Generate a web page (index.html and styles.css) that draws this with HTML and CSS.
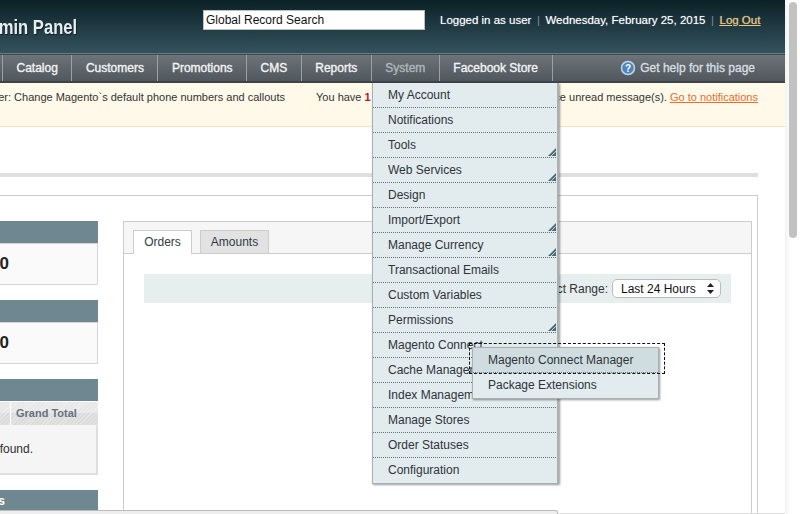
FILE: index.html
```html
<!DOCTYPE html>
<html lang="en">
<head>
<meta charset="utf-8">
<title>Magento Admin Panel</title>
<link rel="stylesheet" href="styles.css">
</head>
<body>
<div class="page">
  <header class="header">
    <div class="logo"><span class="logo-text">Admin Panel</span></div>
    <input class="search" type="text" value="Global Record Search">
    <div class="account">
      <span>Logged in as user</span><span class="sep">|</span><span>Wednesday, February 25, 2015</span><span class="sep">|</span><a class="logout" href="#">Log Out</a>
    </div>
  </header>
  <nav class="nav">
    <span class="nav-edge"></span>
    <a class="nav-item" href="#">Catalog</a>
    <a class="nav-item" href="#">Customers</a>
    <a class="nav-item" href="#">Promotions</a>
    <a class="nav-item" href="#">CMS</a>
    <a class="nav-item" href="#">Reports</a>
    <a class="nav-item nav-active" href="#">System</a>
    <a class="nav-item" href="#">Facebook Store</a>
    <a class="help" href="#">
      <svg class="help-icon" width="16" height="16" viewBox="0 0 16 16"><circle cx="8" cy="8" r="6.5" fill="#4f83bb" stroke="#c3d6e8" stroke-width="1.5"/><text x="8" y="11.6" text-anchor="middle" class="help-q">?</text></svg>
      <span>Get help for this page</span>
    </a>
  </nav>
  <div class="notice">
    <div class="notice-left"><span>Reminder: Change Magento`s default phone numbers and callouts</span></div>
    <div class="notice-right">You have <b class="critical">1</b> <span class="counts">critical, 2 major, 4 minor and 21 notice</span> unread message(s). <a class="notice-link" href="#">Go to notifications</a></div>
  </div>
  <div class="title-area"></div>
  <div class="panel">
    <aside class="side">
      <section class="side-card">
        <div class="side-head"></div>
        <div class="side-value"><span>$0.00</span></div>
      </section>
      <section class="side-card">
        <div class="side-head"></div>
        <div class="side-value"><span>$0.00</span></div>
      </section>
      <section class="side-card">
        <div class="side-head"></div>
        <div class="grid-head"><span class="grid-th">Grand Total</span></div>
        <div class="grid-empty"><span>No records found.</span></div>
      </section>
      <section class="side-card">
        <div class="side-head side-head-text"><span>Last 5 Search Terms</span></div>
      </section>
    </aside>
    <main class="chart">
      <div class="tabs">
        <a class="tab tab-on" href="#">Orders</a>
        <a class="tab tab-off" href="#">Amounts</a>
      </div>
      <div class="range">
        <span>Select Range:</span>
        <div class="select">
          <span>Last 24 Hours</span>
          <svg width="7" height="11" viewBox="0 0 7 11"><path d="M3.5 0 7 4H0zM3.5 11 0 7h7z" fill="#222"/></svg>
        </div>
      </div>
    </main>
  </div>

  <ul class="menu">
    <li class="row">My Account</li>
    <li class="row">Notifications</li>
    <li class="row">Tools<svg class="arrow" width="8" height="8" viewBox="0 0 9 9"><path d="M9 0V9H0z" fill="#4a6a76"/><path d="M3.5 9 9 3.5" stroke="#e2ebee" stroke-width="1"/></svg></li>
    <li class="row">Web Services<svg class="arrow" width="8" height="8" viewBox="0 0 9 9"><path d="M9 0V9H0z" fill="#4a6a76"/><path d="M3.5 9 9 3.5" stroke="#e2ebee" stroke-width="1"/></svg></li>
    <li class="row">Design</li>
    <li class="row">Import/Export<svg class="arrow" width="8" height="8" viewBox="0 0 9 9"><path d="M9 0V9H0z" fill="#4a6a76"/><path d="M3.5 9 9 3.5" stroke="#e2ebee" stroke-width="1"/></svg></li>
    <li class="row">Manage Currency<svg class="arrow" width="8" height="8" viewBox="0 0 9 9"><path d="M9 0V9H0z" fill="#4a6a76"/><path d="M3.5 9 9 3.5" stroke="#e2ebee" stroke-width="1"/></svg></li>
    <li class="row">Transactional Emails</li>
    <li class="row">Custom Variables</li>
    <li class="row">Permissions<svg class="arrow" width="8" height="8" viewBox="0 0 9 9"><path d="M9 0V9H0z" fill="#4a6a76"/><path d="M3.5 9 9 3.5" stroke="#e2ebee" stroke-width="1"/></svg></li>
    <li class="row">Magento Connect</li>
    <li class="row">Cache Management</li>
    <li class="row">Index Management</li>
    <li class="row">Manage Stores</li>
    <li class="row">Order Statuses</li>
    <li class="row row-last">Configuration</li>
  </ul>
  <ul class="submenu">
    <li class="row sub-hover">Magento Connect Manager</li>
    <li class="row row-last">Package Extensions</li>
  </ul>
  <div class="focus-ring"></div>
  <div class="status"><div class="status-bubble"></div><div class="status-rest"></div></div>
</div>
<div class="scrollbar"><div class="thumb"></div></div>
</body>
</html>
```
FILE: styles.css
```css
* { box-sizing: border-box; }
html, body { height: 100%; }
body {
  margin: 0;
  display: flex;
  height: 514px;
  overflow: hidden;
  background: #fff;
  font-family: "Liberation Sans", Arial, sans-serif;
  font-size: 12px;
  color: #2f2f2f;
}
a { color: inherit; text-decoration: none; }
ul { list-style: none; margin: 0; padding: 0; }

.page { position: relative; width: 785px; height: 514px; overflow: hidden; flex: none; }

.header {
  height: 54px;
  display: flex;
  align-items: flex-start;
  background: linear-gradient(#0b2127, #35525d);
  border-bottom: 1px solid #5f7c83;
}
.logo {
  width: 77px;
  margin-top: 16px;
  overflow: hidden;
  display: flex;
  justify-content: flex-end;
  white-space: nowrap;
  font-size: 20px;
  line-height: 22px;
  font-weight: 700;
  color: #e8eef0;
  text-shadow: 1px 1px 1px #0a1c22;
  flex: none;
}
.logo-text { display: block; transform: scaleX(.83); transform-origin: right center; }
.search {
  width: 222px;
  height: 20px;
  margin: 10px 0 0 126px;
  padding: 0 2px;
  border: 1px solid #b9c0c2;
  background: #fff;
  font: 12px "Liberation Sans", Arial, sans-serif;
  color: #111;
  flex: none;
}
.account {
  margin: 12px 0 0 15px;
  display: flex;
  white-space: nowrap;
  color: #fff;
  font-size: 11.5px;
  line-height: 16px;
  text-shadow: 0 0 1px rgba(255,255,255,.5);
}
.sep { width: 14px; text-align: center; color: #7d8f95; text-shadow: none; }
.logout { color: #f4c672; text-decoration: underline; }

.nav {
  height: 29px;
  display: flex;
  background: linear-gradient(#6d7479, #50585d);
  border-bottom: 2px solid #3b4348;
  border-top: 1px solid #3e4c52;
  color: #fff;
}
.nav-edge { width: 3px; border-right: 1px solid #9aa1a5; }
.nav-item {
  display: flex;
  align-items: center;
  padding: 0 13.5px;
  border-right: 1px solid #9aa1a5;
  color: #f2f4f5;
  -webkit-text-stroke: 0.35px currentColor;
}
.nav-active { color: #aeb7bb; }
.help {
  margin-left: auto;
  padding-right: 30px;
  display: flex;
  align-items: center;
  gap: 4px;
  color: #d8dde0;
  -webkit-text-stroke: 0.35px currentColor;
}
.help-q { font: 700 10px "Liberation Sans", Arial, sans-serif; fill: #fff; -webkit-text-stroke: 0; }

.notice {
  height: 44px;
  display: flex;
  justify-content: space-between;
  padding: 7px 27px 0 0;
  line-height: 14px;
  background: #fff9e9;
  border-bottom: 1px solid #eee3c4;
  color: #333;
  white-space: nowrap;
  font-size: 11px;
}
.notice-left { width: 285px; overflow: hidden; display: flex; justify-content: flex-end; }
.critical { color: #c8102e; }
.counts { word-spacing: 1px; }
.notice-link { color: #ee6b2b; text-decoration: underline; }

.title-area {
  width: 758px;
  height: 50px;
  border-bottom: 4px solid #dfdfdf;
}

.panel {
  width: 758px;
  margin-top: 18px;
  height: 320px;
  display: flex;
  align-items: flex-start;
  gap: 25px;
  padding: 25px 5px 0 0;
  border-top: 1px solid #ccc;
  border-right: 1px solid #ccc;
}

.side { width: 98px; display: flex; flex-direction: column; gap: 15px; flex: none; }
.side-head { height: 22px; background: #6f8790; }
.side-head-text {
  display: flex;
  justify-content: flex-end;
  overflow: hidden;
  white-space: nowrap;
  padding-right: 93px;
  color: #fff;
  font-weight: 700;
  line-height: 22px;
}
.side-value {
  height: 42px;
  display: flex;
  justify-content: flex-end;
  align-items: center;
  padding-right: 88px;
  white-space: nowrap;
  background: #fafafa;
  border: solid #d6d6d6;
  border-width: 1px 1px 1px 0;
  font-size: 17px;
  font-weight: 700;
  color: #222;
}
.grid-head {
  height: 23px;
  margin-top: 1px;
  display: flex;
  justify-content: flex-end;
  align-items: center;
  padding-right: 1px;
  background:
    repeating-linear-gradient(135deg, rgba(255,255,255,.28) 0 1px, transparent 1px 3px),
    linear-gradient(#e8e8e8 50%, #dcdcdc 50%);
}
.grid-th {
  width: 87px;
  padding-left: 5px;
  height: 100%;
  line-height: 23px;
  border-left: 1px solid #fff;
  font-size: 11px;
  font-weight: 700;
  color: #67727c;
  white-space: nowrap;
}
.grid-empty {
  height: 50px;
  display: flex;
  justify-content: flex-end;
  align-items: center;
  padding-right: 63px;
  white-space: nowrap;
  background: #f5f5f5;
  border: solid #dfdfdf;
  border-width: 0 2px 2px 0;
}

.chart { width: 629px; height: 320px; border: 1px solid #ccc; border-bottom: 0; flex: none; }
.tabs {
  height: 32px;
  display: flex;
  align-items: flex-end;
  gap: 8px;
  padding-left: 9px;
  background: #f6f6f6;
  border-bottom: 1px solid #ccc;
}
.tab {
  display: flex;
  align-items: center;
  justify-content: center;
  height: 23px;
  padding-bottom: 1px;
  border: 1px solid #ccc;
  border-bottom: 0;
  color: #2f3b44;
}
.tab-on { width: 59px; height: 24px; margin-bottom: -1px; padding-bottom: 2px; background: #fff; }
.tab-off { width: 69px; background: #e2e2e2; }
.range {
  height: 29px;
  margin: 20px 20px 0 20px;
  display: flex;
  justify-content: flex-end;
  align-items: center;
  gap: 4px;
  padding-right: 10px;
  background: #e6eeee;
  color: #333;
}
.select {
  width: 109px;
  height: 19px;
  padding: 0 6px 0 8px;
  display: flex;
  justify-content: space-between;
  align-items: center;
  background: #fff;
  border: 1px solid #bbb;
  border-radius: 5px;
  color: #111;
}

.menu, .submenu {
  position: absolute;
  background: #e2ebee;
  border: solid #a9b0b2;
  border-width: 0 1px 1px 1px;
  box-shadow: 1px 1px 2px rgba(0,0,0,.4);
}
.menu { left: 372px; top: 83px; width: 187px; padding-right: 1px; border-right-width: 2px; }
.submenu { left: 472px; top: 347px; width: 187px; border-top-width: 1px; }
.row {
  position: relative;
  height: 25px;
  line-height: 25px;
  padding-left: 15px;
  border-bottom: 1px dotted #667277;
  color: #2f3438;
  white-space: nowrap;
}
.row-last { border-bottom: 0; }
.arrow { position: absolute; right: 0; bottom: 1px; }
.sub-hover { background: #cfdde1; }
.focus-ring {
  position: absolute;
  left: 469px;
  top: 343px;
  width: 196px;
  height: 31px;
  border: 1px dashed #111;
}
.status {
  position: absolute;
  left: 0;
  right: 0;
  bottom: 0;
  height: 4px;
  display: flex;
  align-items: flex-end;
}
.status-bubble {
  width: 558px;
  height: 4px;
  background: #eee;
  border: solid #bbb;
  border-width: 1px 1px 0 0;
  border-top-right-radius: 3px;
}
.status-rest { flex: 1; height: 1px; background: #ddd; }

.scrollbar {
  width: 15px;
  height: 514px;
  flex: none;
  padding: 2px 3px 0 4px;
  background: linear-gradient(90deg, #f3f3f3, #fff 40%);
}
.thumb { height: 236px; border-radius: 4px; background: #c2c2c2; }
```
